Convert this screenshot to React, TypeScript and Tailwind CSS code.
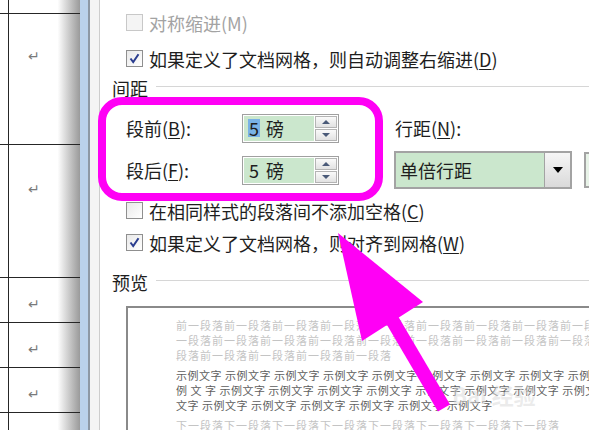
import React from 'react'

const font = { fontFamily: '"Microsoft YaHei", "Noto Sans CJK SC", "Noto Sans", sans-serif' }

function CheckBox({ checked, disabled }: { checked?: boolean; disabled?: boolean }) {
  return (
    <div
      className={
        'w-[17px] h-[17px] shrink-0 border flex items-center justify-center ' +
        (disabled
          ? 'border-[#c8c8c8] bg-[#f4f4f4]'
          : 'border-[#8f8f8f] bg-linear-to-br from-[#e9e9e9] to-white')
      }
    >
      {checked && (
        <svg width="11" height="11" viewBox="0 0 11 11">
          <path d="M1.5 5.5 L4.2 9 L9.5 1.2" fill="none" stroke="#2a3d8f" strokeWidth="2" />
        </svg>
      )}
    </div>
  )
}

function CheckRow({ label, checked, disabled, className }: { label: React.ReactNode; checked?: boolean; disabled?: boolean; className?: string }) {
  return (
    <div className={'h-[30px] flex items-center pl-[26px] gap-[6px] ' + (className ?? '')}>
      <CheckBox checked={checked} disabled={disabled} />
      <span className={'text-[18px] leading-none whitespace-nowrap ' + (disabled ? 'text-[#a3a3a3]' : 'text-[#1e1e1e]')}>{label}</span>
    </div>
  )
}

function Section({ title, className }: { title: string; className?: string }) {
  return (
    <div className={'h-[30px] flex items-center pl-[12px] gap-[8px] ' + (className ?? '')}>
      <span className="text-[18px] leading-none text-[#1e1e1e]">{title}</span>
      <div className="flex-1 h-px bg-[#d6d6d6] mt-[-2px]" />
    </div>
  )
}

function Spin({ highlight }: { highlight?: boolean }) {
  return (
    <div className="w-[97px] h-[29px] shrink-0 border border-[#a0a0a0] p-px flex bg-white">
      <div className="flex-1 bg-[#cbe7cd] flex items-center pl-[4px] text-[18px] leading-none text-[#1e1e1e]">
        <span className={highlight ? 'bg-[#79b2e6] px-px' : 'px-px'}>5</span>
        <span className="ml-[6px]">磅</span>
      </div>
      <div className="w-[22px] flex flex-col gap-px ml-px">
        <div className="flex-1 border border-[#b4b4b4] bg-linear-to-b from-[#fafafa] to-[#e2e2e2] flex items-center justify-center">
          <div className="w-0 h-0 border-l-[4px] border-r-[4px] border-b-[4px] border-l-transparent border-r-transparent border-b-[#4a5a78]" />
        </div>
        <div className="flex-1 border border-[#b4b4b4] bg-linear-to-b from-[#fafafa] to-[#e2e2e2] flex items-center justify-center">
          <div className="w-0 h-0 border-l-[4px] border-r-[4px] border-t-[4px] border-l-transparent border-r-transparent border-t-[#4a5a78]" />
        </div>
      </div>
    </div>
  )
}

const U = ({ c }: { c: string }) => <span className="underline underline-offset-2">{c}</span>

function Table() {
  const rows = [
    { h: 'h-[14px]', pt: '', mark: false },
    { h: 'h-[131px]', pt: 'pt-[28px]', mark: true },
    { h: 'h-[133px]', pt: 'pt-[30px]', mark: true },
    { h: 'h-[45px]', pt: 'pt-[12px]', mark: true },
    { h: 'h-[45px]', pt: 'pt-[12px]', mark: true },
    { h: 'h-[45px]', pt: 'pt-[12px]', mark: true },
    { h: 'h-[45px]', pt: 'pt-[12px]', mark: false },
  ]
  return (
    <div className="w-[80px] h-full shrink-0 bg-linear-to-r from-white from-72% to-[#9a9a9a] flex flex-col">
      {rows.map((r, i) => (
        <div key={i} className={'shrink-0 flex border-b border-[#262626] ' + r.h}>
          <div className="w-[9px] border-r border-[#262626]" />
          <div className={'flex-1 pl-[19px] ' + r.pt}>
            {r.mark && (
              <span className="text-[14px] leading-[16px] text-[#7a7a7a]" style={{ fontFamily: '"DejaVu Sans", sans-serif' }}>
                ↵
              </span>
            )}
          </div>
        </div>
      ))}
    </div>
  )
}

function Preview() {
  const before = '前一段落前一段落前一段落前一段落前一段落前一段落前一段落前一段落前一段落'
  const sample = '示例文字 示例文字 示例文字 示例文字 示例文字 示例文字 示例文字 示例文字 示例文字'
  return (
    <div className="ml-[26px] mt-[10px] border-t-2 border-l-2 border-[#8a8a8a] pt-[10px] pl-[48px] overflow-hidden whitespace-nowrap">
      <div className="text-[11px] leading-[15px] tracking-[1px] text-[#c4c4c4]">
        <div>{before}</div>
        <div>{before.slice(1)}</div>
        <div>段落前一段落前一段落前一段落前一段落</div>
      </div>
      <div className="mt-[5px] text-[11px] leading-[15px] tracking-[0.5px] text-[#5e5e5e]">
        <div>{sample}</div>
        <div>例 文 字 {sample}</div>
        <div>文字 示例文字 示例文字 示例文字 示例文字 示例文字 示例文字</div>
      </div>
      <div className="mt-[5px] text-[11px] leading-[15px] tracking-[1px] text-[#c4c4c4]">
        下一段落下一段落下一段落下一段落下一段落下一段落下一段落下一段落
      </div>
    </div>
  )
}

export default function App() {
  return (
    <div className="relative w-[589px] h-[430px] overflow-hidden bg-white flex" style={font}>
      <Table />
      <div className="w-[8px] shrink-0 bg-[#bad1ea]" />
      <div className="flex-1 flex border-l-2 border-[#8d98a4] min-w-0">
        <div className="w-[10px] shrink-0 bg-[#f4f4f4] border-r border-[#cdcdcd]" />
        <div className="flex-1 flex flex-col pt-[8px] min-w-0 overflow-hidden">
          <CheckRow disabled label={<>对称缩进(M)</>} />
          <CheckRow checked className="mt-[7px]" label={<>如果定义了文档网格，则自动调整右缩进(<U c="D" />)</>} />
          <Section title="间距" />
          <div className="pt-[11px] pb-[10px] flex flex-col gap-[12px]">
            <div className="h-[30px] flex items-center pl-[26px]">
              <span className="w-[116px] shrink-0 text-[18px] leading-none text-[#1e1e1e]">段前(<U c="B" />):</span>
              <Spin highlight />
              <span className="ml-[56px] shrink-0 text-[18px] leading-none text-[#1e1e1e]">行距(<U c="N" />):</span>
            </div>
            <div className="h-[30px] flex items-center pl-[26px]">
              <span className="w-[116px] shrink-0 text-[18px] leading-none text-[#1e1e1e]">段后(<U c="F" />):</span>
              <Spin />
              <div className="ml-[55px] w-[178px] h-[38px] shrink-0 border-2 border-[#a3a3a3] flex bg-[#cbe7cd]">
                <span className="flex-1 flex items-center pl-[4px] text-[18px] leading-none text-[#1e1e1e]">单倍行距</span>
                <div className="w-[26px] border-l border-[#a3a3a3] bg-linear-to-b from-[#f6f6f6] to-[#dadada] flex items-center justify-center">
                  <div className="w-0 h-0 border-l-[5px] border-r-[5px] border-t-[6px] border-l-transparent border-r-transparent border-t-black" />
                </div>
              </div>
              <div className="ml-[12px] w-[30px] h-[36px] shrink-0 border-2 border-[#a3a3a3] bg-[#e8f3e8]" />
            </div>
          </div>
          <CheckRow className="mt-[1px]" label={<>在相同样式的段落间不添加空格(<U c="C" />)</>} />
          <CheckRow checked className="mt-[3px]" label={<>如果定义了文档网格，则对齐到网格(<U c="W" />)</>} />
          <Section title="预览" className="mt-[10px]" />
          <Preview />
        </div>
      </div>

      {/* faint site watermark */}
      <div className="absolute left-[452px] top-[383px] text-[22px] leading-none font-bold text-[#d8d8d8]/50 pointer-events-none">Bai 经验</div>

      {/* annotation */}
      <div className="absolute left-[98px] top-[97px] w-[285px] h-[104px] border-[8px] border-[#ff00f5] rounded-[24px] pointer-events-none" />
      <svg className="absolute inset-0 pointer-events-none" width="589" height="430" viewBox="0 0 589 430">
        <polygon points="338,233 362,341 423,302" fill="#ff00f5" />
        <line x1="391" y1="318" x2="444" y2="408" stroke="#ff00f5" strokeWidth="14" />
      </svg>
    </div>
  )
}
